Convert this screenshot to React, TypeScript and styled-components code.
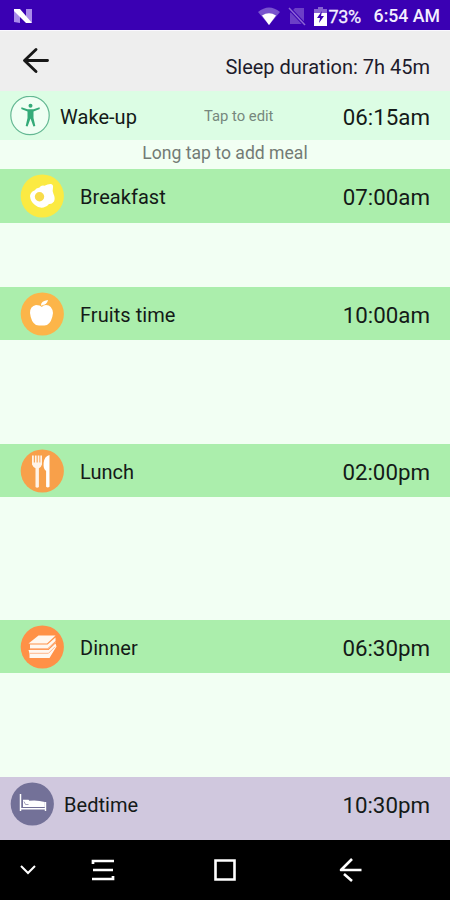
import React from "react";
import styled, { createGlobalStyle } from "styled-components";

const GlobalStyle = createGlobalStyle`
  * { box-sizing: border-box; }
  body { margin: 0; background: #f2fff3; font-family: Roboto, "Liberation Sans", sans-serif; }
  svg { display: block; flex: none; }
`;

const Screen = styled.main`
  display: flex;
  flex-direction: column;
  width: 450px;
  height: 900px;
  overflow: hidden;
  background: #f2fff3;
  color: #141a18;
`;

const StatusBar = styled.header`
  display: flex;
  align-items: center;
  height: 30px;
  padding: 2px 10px 0 13px;
  background: #3a00b3;
  color: #f4efff;
  font-size: 18px;
  white-space: nowrap;
`;

const StatusIcons = styled.div`
  display: flex;
  align-items: center;
  margin-left: auto;
`;

const Battery = styled.span`
  width: 33px;
  margin-left: 2px;
  letter-spacing: -0.35px;
  -webkit-text-stroke: 0.3px currentColor;
`;

const Clock = styled.span`
  margin-left: 12px;
  font-weight: 500;
  font-size: 17.7px;
`;

const TitleBar = styled.div`
  display: flex;
  align-items: flex-start;
  justify-content: space-between;
  height: 61px;
  padding: 16px 20px 0 22px;
  background: #eeeeee;
  border-top: 1px solid #faf8ff;
`;

const Duration = styled.div`
  margin-top: 8px;
  font-size: 20px;
  line-height: 24px;
  color: #1d1b2b;
`;

const Row = styled.section<{ $height: number; $bg: string; $left: number; $gap: number; $bottom?: number }>`
  display: flex;
  align-items: center;
  flex: none;
  height: ${(p) => p.$height}px;
  padding: 0 20px ${(p) => p.$bottom ?? 0}px ${(p) => p.$left}px;
  gap: ${(p) => p.$gap}px;
  background: ${(p) => p.$bg};
`;

const Label = styled.span`
  padding-top: 2px;
  font-size: 20px;
  line-height: 24px;
  letter-spacing: 0.05px;
`;

const Time = styled.time`
  margin-left: auto;
  padding-top: 2px;
  font-size: 22.3px;
  line-height: 26px;
`;

const EditHint = styled.span`
  margin-left: 57px;
  font-size: 14.8px;
  color: #76877d;
`;

const MealHint = styled.div`
  height: 29px;
  padding-top: 1px;
  font-size: 17.6px;
  line-height: 24px;
  text-align: center;
  color: #737b75;
`;

const Space = styled.div<{ $height: number }>`
  flex: none;
  height: ${(p) => p.$height}px;
`;

const StatusGap = styled.span`
  width: 8px;
`;

const NavBar = styled.nav`
  display: grid;
  grid-template-columns: 56px 94px 150px 100px;
  align-items: center;
  justify-items: center;
  height: 60px;
  background: #000;
`;

const NLogo = () => (
  <svg width="20" height="16" viewBox="0 0 20 16">
    <path d="M1 2 7 5v10l-6-1zM13 1h6v14l-6-4z" fill="#a98bea" />
    <path d="M1 1h6l12 14h-6L1 3z" fill="#fff" />
  </svg>
);

const Wifi = () => (
  <svg width="22" height="18" viewBox="0 0 22 18">
    <path d="M0 5Q11-4 22 5L11 18z" fill="#7954cd" />
    <path d="M4 8.5Q11 4 18 8.5L11 18z" fill="#fff" />
  </svg>
);

const NoSim = () => (
  <svg width="18" height="20" viewBox="0 0 18 20">
    <path d="M7 2h9v16H2V7z" fill="#6c3fc7" />
    <path d="m1 2 16 17" stroke="#3a00b3" strokeWidth="3.5" />
    <path d="m1 2 16 17" stroke="#8d66d5" strokeWidth="1.5" />
  </svg>
);

const BatteryIcon = () => (
  <svg width="13" height="19" viewBox="0 0 13 19">
    <path d="M4 0h5v2h4v5H0V2h4z" fill="#8763d1" />
    <path d="M0 6h13v13H0z" fill="#fff" />
    <path d="M8 4 3 11h3l-1 5 5-7H7z" fill="#3a00b3" />
  </svg>
);

const BackArrow = () => (
  <svg width="28" height="27" viewBox="0 0 28 27">
    <path d="M14 2.5 2.5 13.5 14 24.5M3 13.5h22.5" fill="none" stroke="#171717" strokeWidth="2.9" strokeLinecap="round" strokeLinejoin="round" />
  </svg>
);

const PersonIcon = () => (
  <svg width="40" height="40" viewBox="0 0 40 40">
    <circle cx="20" cy="19.5" r="19.2" fill="#effff3" stroke="#64b893" strokeWidth="1.2" />
    <circle cx="20.5" cy="9.8" r="2" fill="#35ab79" />
    <path d="m11.5 11.2 6 2h6l6-2 .3 1.7-6.3 2.6v6.5l1.8 8-1.9.5-2.9-8-2.9 8-1.9-.5 1.8-8v-6.5l-6.3-2.6z" fill="#35ab79" />
  </svg>
);

const Disc = ({ color, children }: { color: string; children: React.ReactNode }) => (
  <svg width="44" height="44" viewBox="0 0 44 44">
    <circle cx="22.3" cy="22" r="21.6" fill={color} />
    {children}
  </svg>
);

const EggIcon = () => (
  <Disc color="#fbea43">
    <path d="M10 22q.7-4.500 4.500-5.500 1.500-2.500 5-3 1.500-2.500 5-1.700 3.500-2 6.500-1.800 2.500.7 2 3.500-1 4 .5 6.500 2 4 .5 7.500-2.500 3-5 2.500-2 3-5.500 3.500-5 .8-8.500-2.500-4.500-3-5-9z" fill="#fff" />
    <circle cx="19.500" cy="22.800" r="4.700" fill="#f8dc4a" />
  </Disc>
);

const AppleIcon = () => (
  <Disc color="#fcb549">
    <path d="M22 15q-2-2-6-2-6 1-6 8 1 9 6 12 6 1 11 0 5-3 6-12-1-8-7-8-3 0-4 2z" fill="#fff" />
    <path d="M21 13q0-4 7-5-1 5-6 5l1 2z" fill="#fff" />
  </Disc>
);

const CutleryIcon = () => (
  <Disc color="#f8a04a">
    <path d="M12 6.5h1.8v7h1.1v-7h1.7v7h1.1v-7h1.7v7h.9v-7H22v9q-1 3-3.1 3.700v18.800q-1.800 1.500-3.400 0V19.200Q13 18 12 15.500z" fill="#fff3e7" />
    <path d="M29.5 6v31.800q-1.800 1.500-3.400 0V22q-3-2-2.500-8 .8-7 5.900-8z" fill="#fff" />
  </Disc>
);

const SandwichIcon = () => (
  <Disc color="#ff9147">
    <path d="M18.500 10.500h17l-8.500 8H8.500z" fill="#fff7ef" />
    <path d="M10 19.600h17.500l8-7.200v3.600l-8 7.500H10z" fill="#fff7ef" />
    <path d="M8.500 25h20l7-6.500 1 3-7 11.500h-20v-4.500z" fill="#fff7ef" />
    <path d="M10 23.800h18l8-7M10 28.300h18.500l6.500-6.500" fill="none" stroke="#ffb78d" strokeWidth="1" />
  </Disc>
);

const BedIcon = () => (
  <Disc color="#737198">
    <path d="M10.5 12v17" fill="none" stroke="#fff" strokeWidth="1.5" />
    <path d="M10 26.800h26M35.500 20v9" fill="none" stroke="#fff" strokeWidth="1.4" />
    <path d="M13 17.800h5.500l.8 1q8-1 15.500 1.200V25H13z" fill="#fff" />
    <path d="m14 19.500 1.500 3h3" fill="none" stroke="#8a87a8" strokeWidth=".8" />
  </Disc>
);

const ChevronDown = () => (
  <svg width="18" height="12" viewBox="0 0 18 12">
    <path d="m2 2 7 7 7-7" fill="none" stroke="#fff" strokeWidth="2" />
  </svg>
);

const RecentIcon = () => (
  <svg width="24" height="24" viewBox="0 0 24 24">
    <path d="M2 6V3h21M2 12h20M1 21h21v-3" fill="none" stroke="#fff" strokeWidth="2.7" />
  </svg>
);

const HomeIcon = () => (
  <svg width="24" height="24" viewBox="0 0 24 24">
    <path d="M2.500 2.500h19v19h-19z" fill="none" stroke="#fff" strokeWidth="2.6" />
  </svg>
);

const NavBack = () => (
  <svg width="26" height="26" viewBox="0 0 26 26">
    <path d="M15 2 4 13h20.500M7 17l8 7" fill="none" stroke="#fff" strokeWidth="2.6" strokeLinejoin="round" />
  </svg>
);

const meals = [
  { name: "Breakfast", time: "07:00am", icon: <EggIcon />, height: 54, after: 64 },
  { name: "Fruits time", time: "10:00am", icon: <AppleIcon />, height: 53, after: 104 },
  { name: "Lunch", time: "02:00pm", icon: <CutleryIcon />, height: 53, after: 123 },
  { name: "Dinner", time: "06:30pm", icon: <SandwichIcon />, height: 53, after: 104 },
];

export default function App() {
  return (
    <Screen>
      <GlobalStyle />
      <StatusBar>
        <NLogo />
        <StatusIcons>
          <Wifi />
          <StatusGap />
          <NoSim />
          <StatusGap />
          <BatteryIcon />
          <Battery>73%</Battery>
          <Clock>6:54 AM</Clock>
        </StatusIcons>
      </StatusBar>
      <TitleBar>
        <BackArrow />
        <Duration>Sleep duration: 7h 45m</Duration>
      </TitleBar>
      <Row $height={49} $bg="#dcfde4" $left={10} $gap={10}>
        <PersonIcon />
        <Label>Wake-up</Label>
        <EditHint>Tap to edit</EditHint>
        <Time>06:15am</Time>
      </Row>
      <MealHint>Long tap to add meal</MealHint>
      {meals.map((meal) => (
        <React.Fragment key={meal.name}>
          <Row $height={meal.height} $bg="#abeeac" $left={20} $gap={16}>
            {meal.icon}
            <Label>{meal.name}</Label>
            <Time>{meal.time}</Time>
          </Row>
          <Space $height={meal.after} />
        </React.Fragment>
      ))}
      <Row $height={63} $bg="#d0c8de" $left={10} $gap={10} $bottom={10}>
        <BedIcon />
        <Label>Bedtime</Label>
        <Time>10:30pm</Time>
      </Row>
      <NavBar>
        <ChevronDown />
        <RecentIcon />
        <HomeIcon />
        <NavBack />
      </NavBar>
    </Screen>
  );
}
